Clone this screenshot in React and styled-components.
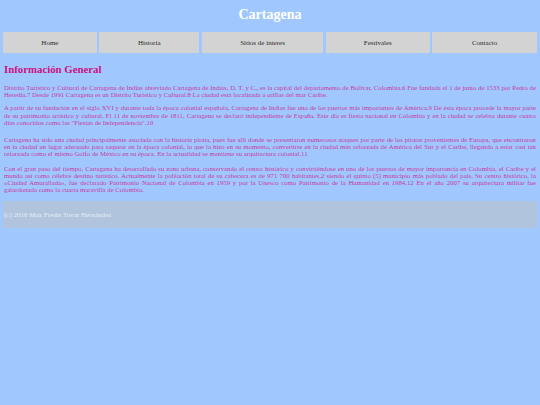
import React from "react";
import styled, { createGlobalStyle } from "styled-components";

const Global = createGlobalStyle`
  html, body { margin: 0; padding: 0; background: #a0c8ff; }
  body { font-family: "Liberation Serif", "Times New Roman", serif; }
`;

const Page = styled.div`
  padding: 0 3px;
  min-height: 405px;
  box-sizing: border-box;
`;

const Title = styled.h1`
  margin: 0;
  padding-top: 6px;
  height: 26px;
  box-sizing: border-box;
  text-align: center;
  color: #ffffff;
  font-size: 14px;
  font-weight: bold;
  line-height: 18px;
`;

const Nav = styled.nav`
  display: grid;
  grid-template-columns: 94fr 100fr 122fr 104fr 105fr;
  column-gap: 2.5px;
  margin-top: 6px;
`;

const NavItem = styled.a`
  display: flex;
  align-items: center;
  justify-content: center;
  height: 21px;
  background: #d3d3d3;
  color: #2a2a2a;
  font-size: 7px;
  text-decoration: none;
`;

const Main = styled.main`
  padding: 0 1px;
`;

const Heading = styled.h2`
  margin: 9px 0 0;
  color: #cc1180;
  font-size: 10.8px;
  font-weight: bold;
  line-height: 14px;
`;

const Para = styled.p`
  margin: ${p => p.$gap}px 0 0;
  color: #c63aa2;
  font-size: 6.76px;
  line-height: 7.2px;
  text-align: justify;
`;

const Footer = styled.footer`
  margin-top: 8px;
  height: 27px;
  display: flex;
  align-items: center;
  padding: 0 1px;
  background: #b0c4de;
  color: #e6edf7;
  font-size: 7px;
`;

const links = ["Home", "Historia", "Sitios de interes", "Festivales", "Contacto"];

const paragraphs = [
  { gap: 8, text: "Distrito Turístico y Cultural de Cartagena de Indias abreviado Cartagena de Indias, D. T. y C., es la capital del departamento de Bolívar, Colombia.6 Fue fundada el 1 de junio de 1533 por Pedro de Heredia.7 Desde 1991 Cartagena es un Distrito Turístico y Cultural.8 La ciudad está localizada a orillas del mar Caribe." },
  { gap: 6, text: "A partir de su fundación en el siglo XVI y durante toda la época colonial española, Cartagena de Indias fue uno de los puertos más importantes de América.9 De esta época procede la mayor parte de su patrimonio artístico y cultural. El 11 de noviembre de 1811, Cartagena se declaró independiente de España. Este día es fiesta nacional en Colombia y en la ciudad se celebra durante cuatro días conocidos como las \"Fiestas de Independencia\".10" },
  { gap: 10, text: "Cartagena ha sido una ciudad principalmente asociada con la historia pirata, pues fue allí donde se presentaron numerosos ataques por parte de los piratas provenientes de Europa, que encontraron en la ciudad un lugar adecuado para saquear en la época colonial, lo que la hizo en su momento, convertirse en la ciudad más reforzada de América del Sur y el Caribe, llegando a estar casi tan reforzada como el mismo Golfo de México en su época. En la actualidad se mantiene su arquitectura colonial.11" },
  { gap: 7, text: "Con el gran paso del tiempo, Cartagena ha desarrollado su zona urbana, conservando el centro histórico y convirtiéndose en uno de los puertos de mayor importancia en Colombia, el Caribe y el mundo así como célebre destino turístico. Actualmente la población total de su cabecera es de 971 700 habitantes,2 siendo el quinto (5) municipio más poblado del país. Su centro histórico, la «Ciudad Amurallada», fue declarado Patrimonio Nacional de Colombia en 1959 y por la Unesco como Patrimonio de la Humanidad en 1984.12 En el año 2007 su arquitectura militar fue galardonada como la cuarta maravilla de Colombia." },
];

export default function App() {
  return (
    <>
      <Global />
      <Page>
        <Title>Cartagena</Title>
        <Nav>
          {links.map(l => (
            <NavItem key={l} href="#">{l}</NavItem>
          ))}
        </Nav>
        <Main>
          <Heading>Información General</Heading>
          {paragraphs.map((p, i) => (
            <Para key={i} $gap={p.gap}>{p.text}</Para>
          ))}
        </Main>
        <Footer>(c) 2016 Max Fredis Tovar Hernández</Footer>
      </Page>
    </>
  );
}
